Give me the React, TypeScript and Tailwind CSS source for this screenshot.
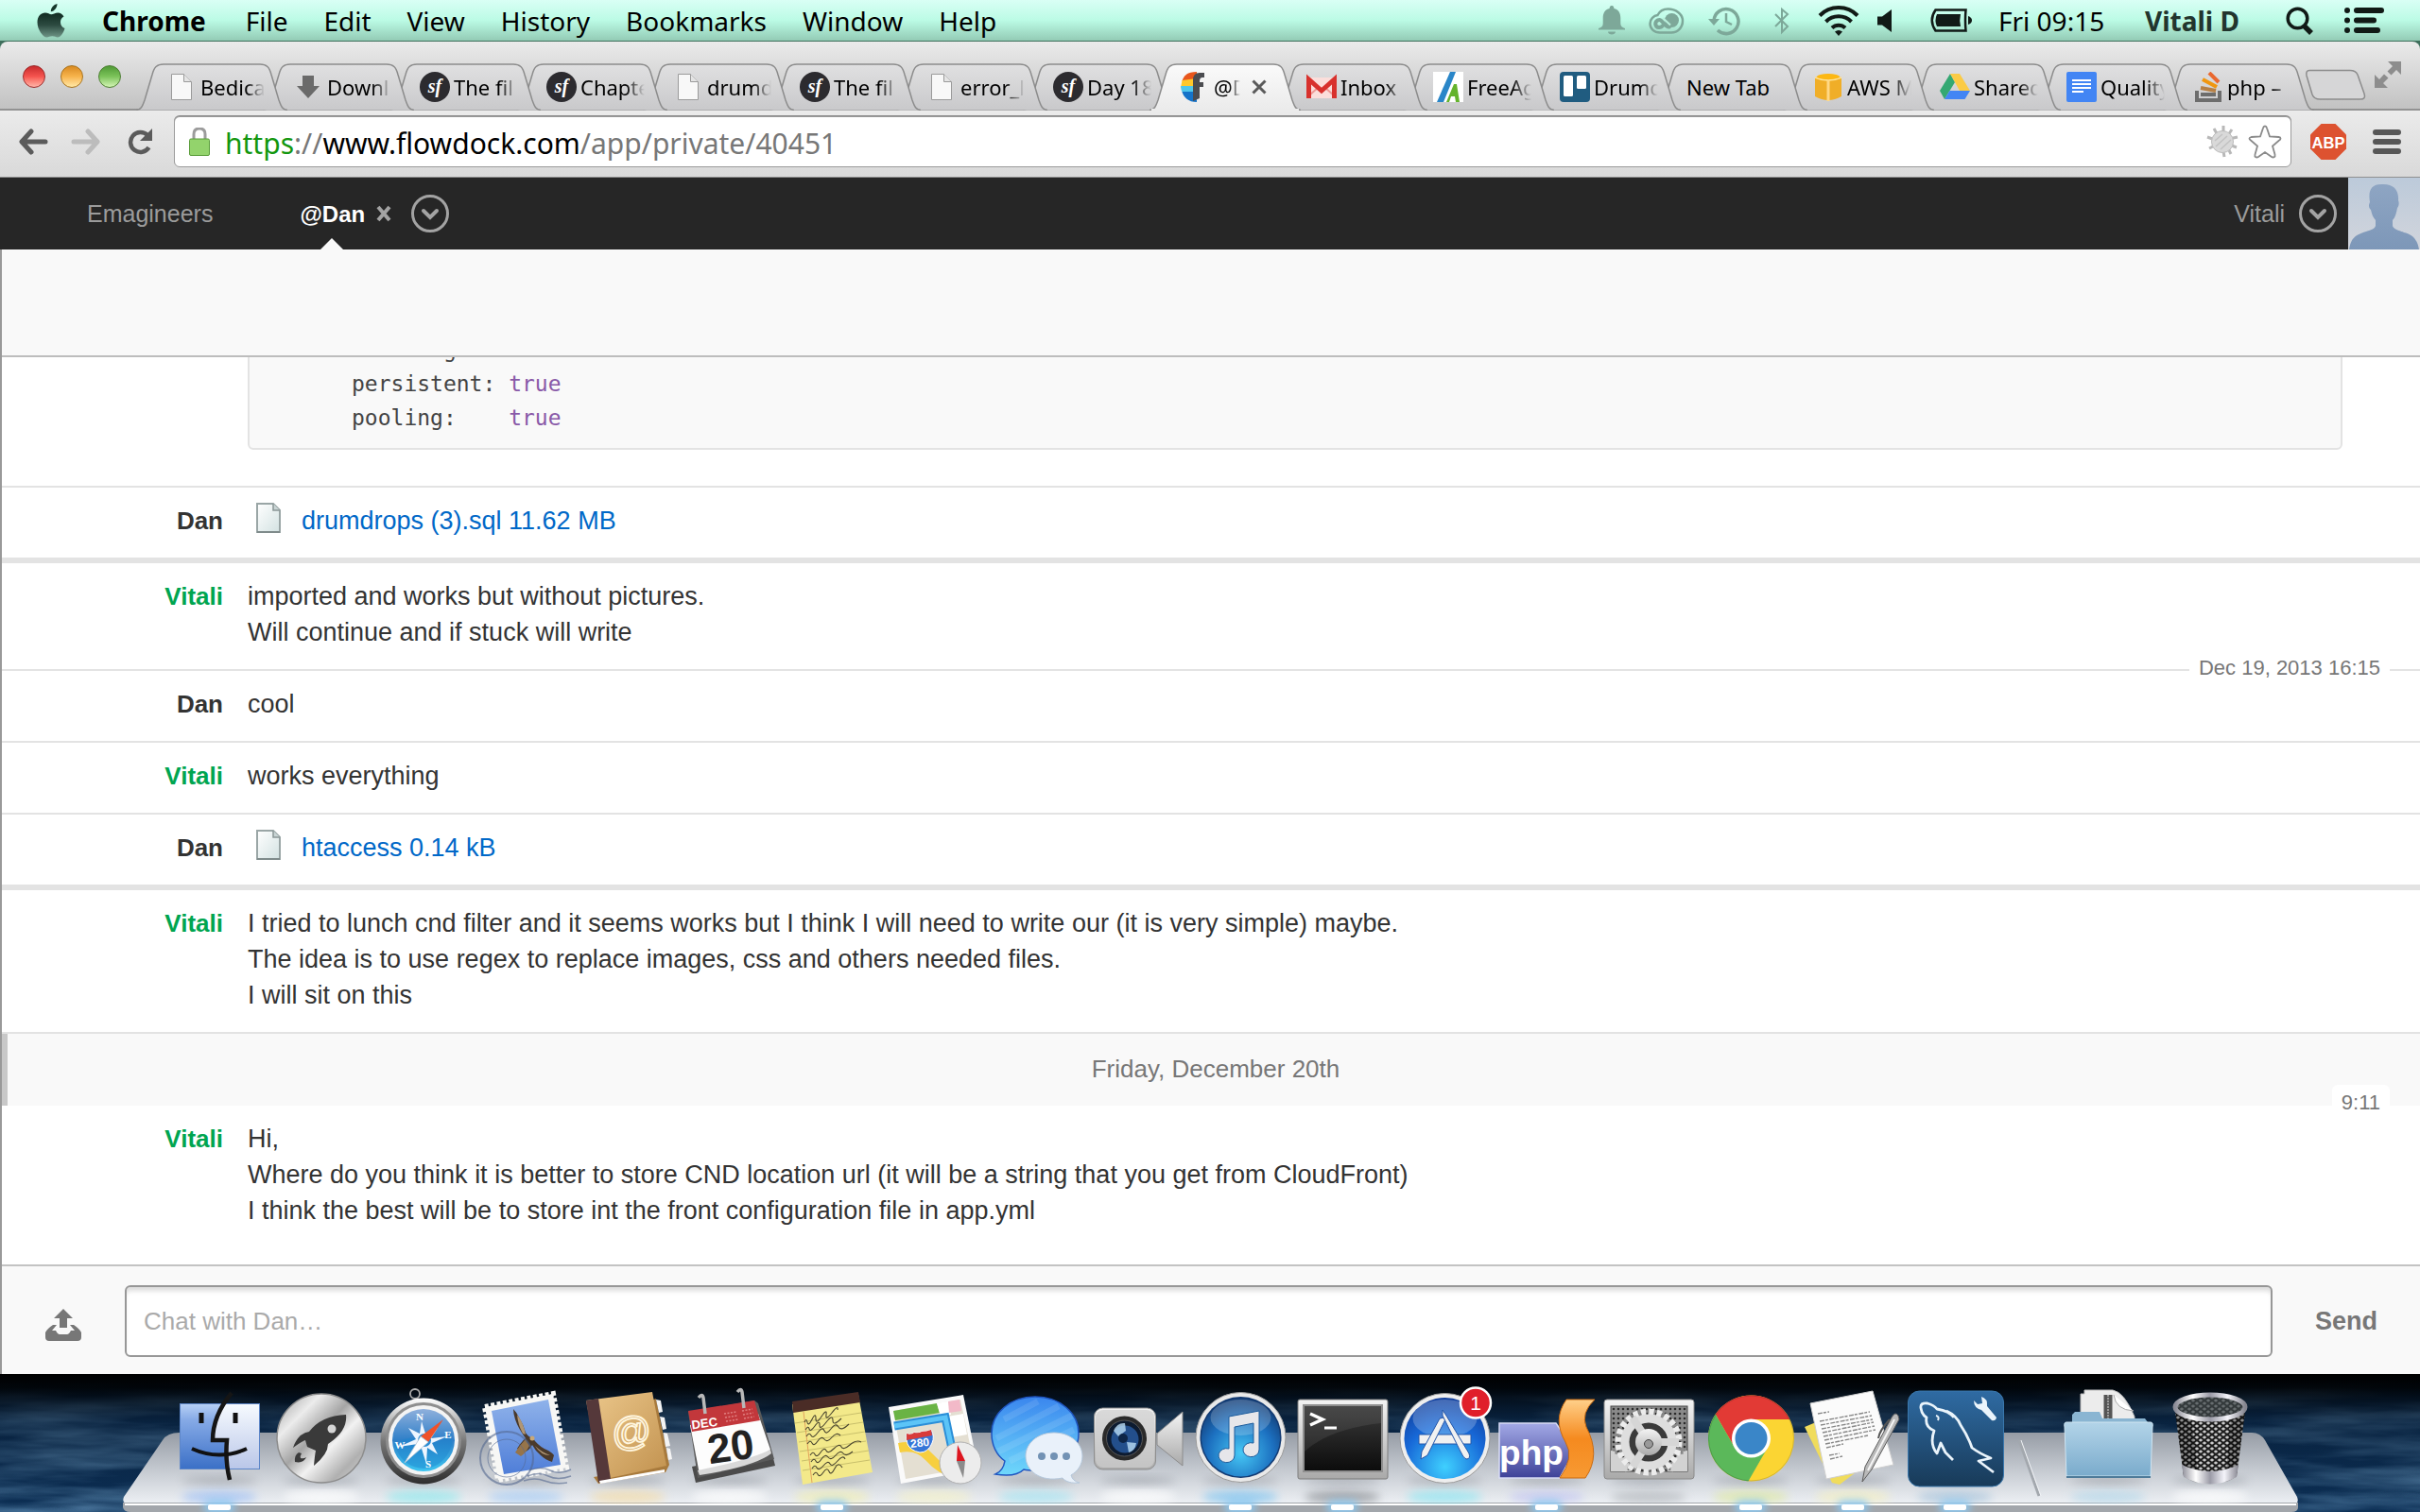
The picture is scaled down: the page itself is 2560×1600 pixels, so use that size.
import React from 'react';

const UI = "font-['Noto_Sans',sans-serif]";

/* ---------- macOS menu bar ---------- */

const MENUS = ['File', 'Edit', 'View', 'History', 'Bookmarks', 'Window', 'Help'];

function AppleLogo() {
  return (
    <svg viewBox="0 0 32 38" className="h-[38px] w-8" aria-label="Apple">
      <defs>
        <linearGradient id="apl" x1="0" y1="0" x2="0" y2="1">
          <stop offset="0" stopColor="#0f2a20" />
          <stop offset=".5" stopColor="#2c4a40" />
          <stop offset="1" stopColor="#6f9587" />
        </linearGradient>
      </defs>
      <path fill="#15362a" d="M22.500 1C22.600 5 19.500 9 15.800 9.300 15.500 5.500 18.800 1.800 22.500 1Z" />
      <path
        fill="url(#apl)"
        d="M29.500 14.500C26.800 16.200 26 18.200 26 20.500c0 3 1.700 5.400 4.500 6.500-1.200 4.500-4.500 9.500-7.500 9.500-2 0-3-1.200-5.700-1.200S13.500 36.500 11.500 36.500C7.500 36.500 1.500 28.500 1.500 20.500 1.500 14 5.500 10.500 9.800 10.500c2.700 0 4.800 1.700 6.500 1.700 1.600 0 4-1.800 7.200-1.800 2 0 4.500 1 6 4.100Z"
      />
    </svg>
  );
}

function MenuBar() {
  return (
    <header
      className={`flex h-11 shrink-0 items-center border-b border-[#3f6f5c] bg-linear-to-b from-[#d9fff5] via-[#bbfbe5] to-[#93cbb5] px-[38px] text-[28px] leading-none text-black ${UI}`}
    >
      <AppleLogo />
      <nav className="ml-[38px] flex items-center gap-[38px]">
        <button className="mr-1 font-bold">Chrome</button>
        {MENUS.map((m) => (
          <button key={m}>{m}</button>
        ))}
      </nav>
      <div className="ml-auto flex items-center text-[#111a16]">
        <svg viewBox="0 0 28 32" className="h-8 w-7 fill-[#7da899]" aria-label="Notifications">
          <path d="M14 0c2 0 2.500 2 2.300 3 5 1 7 5 7 10v6c0 3 2 4 4.700 5v1.500H0V24c3-1 4.700-2 4.700-5v-6c0-5 2-9 7-10C11.500 2 12 0 14 0Z" />
          <path d="M10 27.500h8c0 4-8 4-8 0Z" />
        </svg>
        <svg viewBox="0 0 38 28" className="ml-[25px] h-7 w-[38px]" fill="none" stroke="#7da899" aria-label="Creative Cloud">
          <path strokeWidth="2.500" d="M12 26.500C6 26.500 1.500 22.500 1.500 17c0-5 4-8.500 8-9 2-4 6-6.500 11-6.500 8 0 15.500 5 15.500 12.500 0 7-5 12.500-12 12.500Z" />
          <circle cx="24.500" cy="13.500" r="7.500" fill="#7da899" stroke="none" />
          <path strokeWidth="4" strokeLinecap="round" d="M22 20.500c-5 1-7-8-11-7.500-5 .5-5 8 0 8 2 0 3-.5 4-2" />
          <path strokeWidth="2" stroke="#b9f0dc" d="M15 11l8 7.500" />
        </svg>
        <svg viewBox="0 0 34 32" className="ml-[25px] h-8 w-[34px]" fill="none" stroke="#7da899" strokeWidth="3.500" aria-label="Time Machine">
          <path d="M6 16a13 13 0 1 1 4 10" />
          <path d="M19 8v9l6 3" strokeWidth="2.500" />
          <path d="M0 14h12l-6 7Z" fill="#7da899" stroke="none" />
        </svg>
        <svg viewBox="0 0 16 30" className="ml-9 h-[30px] w-4" fill="none" stroke="#7da899" strokeWidth="2" aria-label="Bluetooth">
          <path d="M1 8l13 13-6 6V3l6 5L1 21" />
        </svg>
        <svg viewBox="0 0 44 32" className="ml-[30px] h-8 w-11" fill="none" stroke="#111a16" strokeWidth="4" aria-label="Wi-Fi">
          <path d="M2 10.500a28 28 0 0 1 40 0M8.500 17a19 19 0 0 1 27 0M15 23.500a10 10 0 0 1 14 0" />
          <path d="M22 32l-4-4.500q4-3 8 0Z" fill="#111a16" stroke="none" />
        </svg>
        <svg viewBox="0 0 16 24" className="ml-[19px] h-6 w-4" fill="#111a16" aria-label="Volume">
          <path d="M0 7.500h5L15 0v24L5 16.500H0Z" />
        </svg>
        <svg viewBox="0 0 44 25" className="ml-10 h-[25px] w-11" fill="none" stroke="#111a16" strokeWidth="2.500" aria-label="Battery">
          <path d="M5.500 1.500H37.500Q36.500 12.500 37.500 23.500H5.500Q-2 12.500 5.500 1.500Z" />
          <path d="M7 6h25q-1.500 6.500 0 13H7q-3-6.500 0-13Z" fill="#111a16" stroke="none" />
          <path d="M40 8q4 1.500 4 4.500t-4 4.500Z" fill="#111a16" stroke="none" />
        </svg>
        <time className="ml-7 w-[120px] text-black">Fri 09:15</time>
        <button className="ml-[35px] w-[106px] text-left font-bold whitespace-nowrap text-[#22352d]">Vitali D</button>
        <button aria-label="Spotlight" className="ml-[43px]">
          <svg viewBox="0 0 30 30" className="size-[30px]" fill="none" stroke="#111a16" strokeWidth="3.500">
            <circle cx="12.500" cy="12.500" r="10.300" />
            <path d="M19 20l8 8" strokeWidth="5.500" />
          </svg>
        </button>
        <button aria-label="Notification Center" className="ml-8">
          <svg viewBox="0 0 42 27" className="h-[27px] w-[42px]" stroke="#111a16" strokeWidth="6" strokeLinecap="round">
            <path d="M3 3h0M3 13.500h0M3 24h0M13 3h26M13 13.500h18M13 24h22" />
          </svg>
        </button>
      </div>
    </header>
  );
}

/* ---------- favicons ---------- */

function PageIcon() {
  return (
    <svg viewBox="0 0 32 32" className="size-8">
      <path d="M5.500 2.500h13l8 8v19h-21Z" fill="#f8f8f8" stroke="#9a9a9a" />
      <path d="M18.500 2.500v8h8" fill="#e4e4e4" stroke="#9a9a9a" />
    </svg>
  );
}
function DownIcon() {
  return (
    <svg viewBox="0 0 32 32" className="size-8">
      <path d="M10 4h12v11h6L16 28 4 15h6Z" fill="#6a6a6a" />
    </svg>
  );
}
function SymfonyIcon() {
  return (
    <svg viewBox="0 0 32 32" className="size-8">
      <circle cx="16" cy="16" r="16" fill="#2c2b2f" />
      <text x="16" y="22" textAnchor="middle" fill="#fff" fontFamily="Liberation Serif, serif" fontStyle="italic" fontWeight="bold" fontSize="20">
        sf
      </text>
    </svg>
  );
}
function FlowdockIcon() {
  return (
    <svg viewBox="0 0 32 32" className="size-8">
      <path d="M18 0C8 0 4 4 2.500 10L18 12Z" fill="#e8561c" />
      <path d="M2.500 9L18 7v10H1Z" fill="#ffc82a" />
      <path d="M1 15h17v8L3 22Q1 19 1 15Z" fill="#4fc6ea" />
      <path d="M2.500 21L18 21v11C9 32 4 27 2.500 21Z" fill="#1573c9" />
      <path d="M14 31V9q0-8 7-8h5v5h-2q-3 0-3 4v1h4v5h-4v12Z" fill="#4b4c50" />
    </svg>
  );
}
function GmailIcon() {
  return (
    <svg viewBox="0 0 32 32" className="size-8">
      <path d="M0 6h32v22H0Z" fill="#fbdedb" />
      <path d="M3 25l10-9M29 25l-10-9" stroke="#ee9a96" strokeWidth="2" />
      <path d="M2.500 28V8L16 20 29.500 8v20" fill="none" stroke="#d8312d" strokeWidth="5" />
    </svg>
  );
}
function FreeAgentIcon() {
  return (
    <svg viewBox="0 0 32 32" className="size-8">
      <path d="M0 0h32v32H0Z" fill="#fff" />
      <path d="M18 0h6L11 32H4Z" fill="#2a86c8" />
      <path d="M14 32l8-19h3l3 19h-4l-1-6h-4l-2 6Z" fill="#64b32c" />
    </svg>
  );
}
function TrelloIcon() {
  return (
    <svg viewBox="0 0 32 32" className="size-8">
      <rect width="32" height="32" rx="4" fill="#205c80" />
      <rect x="4" y="4" width="10" height="22" rx="1.500" fill="#fff" />
      <rect x="18" y="4" width="10" height="14" rx="1.500" fill="#fff" />
    </svg>
  );
}
function AwsIcon() {
  return (
    <svg viewBox="0 0 32 32" className="size-8">
      <path d="M2 6q14-7 28 0v20q-14 8-28 0Z" fill="#f0ae28" />
      <path d="M2 6q14 6 28 0" fill="none" stroke="#ffe49a" strokeWidth="1.500" />
      <path d="M16 9v22" stroke="#ffd886" strokeWidth="3" />
      <ellipse cx="16" cy="5" rx="12" ry="3" fill="#fdb813" />
    </svg>
  );
}
function DriveIcon() {
  return (
    <svg viewBox="0 0 32 32" className="size-8">
      <path d="M11 2L0 20l5 9L16 11Z" fill="#34a872" />
      <path d="M11 2h10l11 18H21Z" fill="#fbcb45" />
      <path d="M10.500 20H32l-5.500 9H5Z" fill="#4285f4" />
    </svg>
  );
}
function DocsIcon() {
  return (
    <svg viewBox="0 0 32 32" className="size-8">
      <rect width="32" height="32" rx="2" fill="#4285f4" />
      <path d="M6 9h20M6 13h20M6 17h20M6 21h12" stroke="#fff" strokeWidth="2" />
    </svg>
  );
}
function StackIcon() {
  return (
    <svg viewBox="0 0 32 32" className="size-8" fill="none">
      <path d="M4 20v10h24V20" stroke="#6d6d6d" strokeWidth="4" />
      <path d="M8 24h16" stroke="#6d6d6d" strokeWidth="4" />
      <path d="M8 17l16 3" stroke="#b78045" strokeWidth="4" />
      <path d="M10 8l15 8" stroke="#f0960f" strokeWidth="4" />
      <path d="M17 1l10 10" stroke="#e9682f" strokeWidth="4" />
    </svg>
  );
}

/* ---------- Chrome window ---------- */

type TabInfo = { title: string; icon: React.ReactNode; active?: boolean };

const TABS: TabInfo[] = [
  { title: 'Bedica', icon: <PageIcon /> },
  { title: 'Downl', icon: <DownIcon /> },
  { title: 'The fil', icon: <SymfonyIcon /> },
  { title: 'Chapte', icon: <SymfonyIcon /> },
  { title: 'drumd', icon: <PageIcon /> },
  { title: 'The fil', icon: <SymfonyIcon /> },
  { title: 'error_l', icon: <PageIcon /> },
  { title: 'Day 18', icon: <SymfonyIcon /> },
  { title: '@D', icon: <FlowdockIcon />, active: true },
  { title: 'Inbox', icon: <GmailIcon /> },
  { title: 'FreeAg', icon: <FreeAgentIcon /> },
  { title: 'Drumd', icon: <TrelloIcon /> },
  { title: 'New Tab', icon: null },
  { title: 'AWS M', icon: <AwsIcon /> },
  { title: 'Shared', icon: <DriveIcon /> },
  { title: 'Quality', icon: <DocsIcon /> },
  { title: 'php –', icon: <StackIcon /> },
];

function Tab({ tab, order }: { tab: TabInfo; order: number }) {
  return (
    <div
      className={`relative -mr-[26px] flex h-[50px] w-[160px] shrink-0 items-center pl-8 ${tab.active ? 'pr-9' : 'pr-6'}`}
      style={{ zIndex: order }}
    >
      <svg viewBox="0 0 160 50" preserveAspectRatio="none" className="absolute inset-0 h-full w-full" aria-hidden="true">
        <defs>
          <linearGradient id="tabOn" x1="0" y1="0" x2="0" y2="1">
            <stop offset="0" stopColor="#fafafa" />
            <stop offset="1" stopColor="#ebebeb" />
          </linearGradient>
          <linearGradient id="tabOff" x1="0" y1="0" x2="0" y2="1">
            <stop offset="0" stopColor="#e0e0e1" />
            <stop offset="1" stopColor="#c9c9cb" />
          </linearGradient>
        </defs>
        <path
          d="M0 49.500C6 49 7 44 9 39L17 12C19 4 22 1 29 1H131C138 1 141 4 143 12L151 39C153 44 154 49 160 49.500"
          fill={tab.active ? 'url(#tabOn)' : 'url(#tabOff)'}
          stroke="#8c8c8c"
          strokeWidth="1.500"
        />
        {tab.active && <path d="M2 49.500H158" stroke="#ebebeb" strokeWidth="3" />}
      </svg>
      {tab.icon && <span className="relative mr-1 shrink-0">{tab.icon}</span>}
      <button
        className={`relative min-w-0 flex-1 overflow-hidden text-left text-[22px] leading-8 whitespace-nowrap text-black ${
          tab.icon
            ? tab.active
              ? '[mask-image:linear-gradient(to_right,black_60%,transparent)]'
              : '[mask-image:linear-gradient(to_right,black_70%,transparent)]'
            : ''
        }`}
      >
        {tab.title}
      </button>
      {tab.active && (
        <button aria-label="Close tab" className="relative ml-3">
          <svg viewBox="0 0 16 16" className="size-4" stroke="#5a5a5a" strokeWidth="3">
            <path d="M1.500 1.500l13 13M14.500 1.500l-13 13" />
          </svg>
        </button>
      )}
    </div>
  );
}

function TabStrip() {
  return (
    <div className={`flex h-[73px] shrink-0 items-end rounded-t-lg border-b-2 border-[#929292] bg-linear-to-b from-[#ebebeb] to-[#c2c2c2] ${UI}`}>
      <div className="mb-[22px] flex gap-4 pl-6">
        {[
          ['Close', 'from-[#c8292c] via-[#f5544f] to-[#ffb3a8] border-[#9c2a2a]'],
          ['Minimise', 'from-[#d98a1e] via-[#f7b44c] to-[#ffe9a6] border-[#a8731e]'],
          ['Zoom', 'from-[#4f9a35] via-[#7cc35a] to-[#d3f5b4] border-[#4d7f33]'],
        ].map(([label, tone]) => (
          <button key={label} aria-label={label} className={`size-6 rounded-full border bg-linear-to-b ${tone}`} />
        ))}
      </div>
      <div className="relative -mb-0.5 ml-4 flex">
        {TABS.map((t, i) => (
          <Tab key={i} tab={t} order={t.active ? 40 : 30 - i} />
        ))}
      </div>
      <button aria-label="New tab" className="mb-2 ml-4">
        <svg viewBox="0 0 66 34" className="h-[34px] w-[66px]">
          <path d="M5 1.500H48Q54 1.500 56 6L63 26Q65 32 59 32H16Q10 32 8 27L2 7Q1 1.500 5 1.500Z" fill="#d6d6d7" stroke="#8c8c8c" strokeWidth="1.500" />
        </svg>
      </button>
      <button aria-label="Enter full screen" className="mr-5 mb-[22px] ml-auto">
        <svg viewBox="0 0 28 28" className="size-7" fill="#8d8d8d">
          <path d="M14 0h14v14l-5-5-5.500 5.500-4-4L19 5ZM0 28V14l5 5 5-5.500 4.500 4L9 23l5 5Z" />
        </svg>
      </button>
    </div>
  );
}

function Toolbar() {
  return (
    <div className={`flex h-[71px] shrink-0 items-center border-b border-[#8f8f8f] bg-linear-to-b from-[#ebebeb] to-[#d9d9d9] pr-5 pb-1 pl-5 ${UI}`}>
      <button aria-label="Back">
        <svg viewBox="0 0 31 28" className="h-7 w-[31px]" fill="none" stroke="#5b5b5b" strokeWidth="5" strokeLinecap="round" strokeLinejoin="round">
          <path d="M13 3L3 14l10 11M4 14h24" />
        </svg>
      </button>
      <button aria-label="Forward" className="ml-6">
        <svg viewBox="0 0 31 28" className="h-7 w-[31px]" fill="none" stroke="#bcbcbc" strokeWidth="5" strokeLinecap="round" strokeLinejoin="round">
          <path d="M18 3l10 11-10 11M27 14H3" />
        </svg>
      </button>
      <button aria-label="Reload" className="ml-7">
        <svg viewBox="0 0 28 28" className="size-7" fill="none" stroke="#5b5b5b" strokeWidth="4.500">
          <path d="M22 7a10.500 10.500 0 1 0 1.500 13" />
          <path d="M27 0v13H14Z" fill="#5b5b5b" stroke="none" />
        </svg>
      </button>
      <div className="ml-[22px] flex h-[54px] flex-1 items-center rounded-md border border-[#9b9b9b] bg-white pr-[9px] pl-[15px] text-[30px] leading-none shadow-[0_-1px_0_#8a8a8a]">
        <svg viewBox="0 0 22 30" className="h-[30px] w-[22px]" aria-label="Secure">
          <path d="M5 13V7q0-6 6-6t6 6v6" fill="none" stroke="#9c9c9c" strokeWidth="3" />
          <rect x=".5" y="12" width="21" height="17.500" rx="1.500" fill="#93d36c" stroke="#5a9c3a" />
        </svg>
        <div className="ml-4 flex-1 pt-1 text-[#777]" role="textbox" aria-label="Address">
          <span className="text-[#13970f]">https</span>://<span className="text-black">www.flowdock.com</span>/app/private/40451
        </div>
        <svg viewBox="0 0 34 34" className="size-[34px]" aria-label="Blocked plug-in">
          <g stroke="#b8b8b8" strokeWidth="3" fill="none">
            <path d="M1 12l8 3M3 24l8-4M8 3l4 7M18 0v8M27 4l-4 6M33 12l-9 2M32 23l-8-3M26 30l-3-6M19 33l-1-6" />
          </g>
          <circle cx="17" cy="17" r="11.500" fill="#d9d9d9" stroke="#bdbdbd" />
          <path d="M9 16l8-7M10 22L22 11M15 25l11-10" stroke="#c2c2c2" strokeWidth="1.500" />
        </svg>
        <button aria-label="Bookmark this page" className="ml-2.5">
          <svg viewBox="0 0 36 36" className="size-9">
            <path
              d="M18 1.500q1.500 0 2 2l3 9 9.500.5q2 .2 2 1.500t-1.500 2l-7 6 2.500 9q.5 2-.8 2.700t-2.700-.3L18 29l-7 4.900q-1.500 1-2.800.3t-.7-2.700l2.500-9-7-6q-1.500-1-1.500-2t2-1.500L13 12.500l3-9q.5-2 2-2Z"
              fill="#fff"
              stroke="#8a8a8a"
              strokeWidth="1.800"
            />
          </svg>
        </button>
      </div>
      <button aria-label="Adblock Plus" className="ml-5">
        <svg viewBox="0 0 38 38" className="size-[38px]">
          <path d="M11.500 0h15L38 11.500v15L26.500 38h-15L0 26.500v-15Z" fill="#dd5230" />
          <text x="19" y="25.500" textAnchor="middle" fill="#fff" fontFamily="Liberation Sans, sans-serif" fontWeight="bold" fontSize="16.500">
            ABP
          </text>
        </svg>
      </button>
      <button aria-label="Chrome menu" className="ml-7">
        <svg viewBox="0 0 30 26" className="h-[26px] w-[30px]" stroke="#575757" strokeWidth="6" strokeLinecap="round">
          <path d="M3 3h24M3 13h24M3 23h24" />
        </svg>
      </button>
    </div>
  );
}

/* ---------- Flowdock ---------- */

function ChevronButton({ label }: { label: string }) {
  return (
    <button aria-label={label}>
      <svg viewBox="0 0 42 42" className="size-[42px]" fill="none" stroke="#a3a3a3" strokeWidth="3">
        <circle cx="21" cy="21" r="18.500" />
        <path d="M14 18l7 7 7-7" strokeWidth="4" strokeLinecap="round" />
      </svg>
    </button>
  );
}

function FlowHeader() {
  return (
    <nav className="flex h-[76px] shrink-0 items-center bg-[#262626] pl-[92px] text-[25px] text-[#9b9b9b]">
      <a href="#emagineers" className="pt-0.5">Emagineers</a>
      <div className="relative ml-[92px] flex h-full items-center">
        <a href="#dan" className="pt-0.5 text-[24px] font-bold text-white">@Dan</a>
        <span className="absolute bottom-0 left-[22px] border-x-[12px] border-b-[12px] border-x-transparent border-b-[#f9f9f9]" />
      </div>
      <button aria-label="Close conversation" className="ml-3">
        <svg viewBox="0 0 16 18" className="h-[18px] w-4" stroke="#a3a3a3" strokeWidth="4">
          <path d="M2 2l12 14M14 2L2 16" />
        </svg>
      </button>
      <span className="ml-5 flex">
        <ChevronButton label="More conversations" />
      </span>
      <span className="mr-3.5 ml-auto pt-0.5">Vitali</span>
      <ChevronButton label="Account menu" />
      <svg viewBox="0 0 76 76" className="ml-[11px] size-[76px]" aria-label="Avatar">
        <defs>
          <linearGradient id="avBg" x1="0" y1="0" x2="0" y2="1">
            <stop offset="0" stopColor="#bccada" />
            <stop offset="1" stopColor="#d2d5dc" />
          </linearGradient>
          <linearGradient id="avFg" x1="0" y1="0" x2="0" y2="1">
            <stop offset="0" stopColor="#8ea5c3" />
            <stop offset="1" stopColor="#7d97b8" />
          </linearGradient>
        </defs>
        <path d="M0 0h76v76H0Z" fill="url(#avBg)" />
        <path
          d="M1 76C3 62 10 60 19 57c6-2 9-3 10-6v-6c-3-3-4-7-5-11-3-3-2-6-1-8C21 14 24 7 35 7c12-1 19 5 18 17 1 2 1 6-1 8-1 5-2 10-5 13v6c1 4 8 5 12 7 8 2 14 6 16 18Z"
          fill="url(#avFg)"
        />
      </svg>
    </nav>
  );
}

function FileIcon() {
  return (
    <svg viewBox="0 0 26 32" className="h-8 w-[26px]" aria-hidden="true">
      <defs>
        <linearGradient id="fileG" x1="0" y1="0" x2="1" y2="1">
          <stop offset="0" stopColor="#fff" />
          <stop offset="1" stopColor="#d3e2e2" />
        </linearGradient>
      </defs>
      <path d="M1 1h17l7 7v23H1Z" fill="url(#fileG)" stroke="#9aa6a6" strokeWidth="2" />
      <path d="M18 1v7h7" fill="#c9d5d5" stroke="#8b9797" strokeWidth="1.500" />
      <path d="M1 31h24" stroke="#7f8b8b" strokeWidth="2" />
    </svg>
  );
}

type Msg = { who: 'Dan' | 'Vitali'; lines?: string[]; file?: string; time?: string; edge: string };

const MESSAGES: Msg[] = [
  { who: 'Dan', file: 'drumdrops (3).sql 11.62 MB', edge: 'border-b-[6px]' },
  { who: 'Vitali', lines: ['imported and works but without pictures.', 'Will continue and if stuck will write'], edge: 'border-b-2' },
  { who: 'Dan', lines: ['cool'], time: 'Dec 19, 2013 16:15', edge: 'border-b-2' },
  { who: 'Vitali', lines: ['works everything'], edge: 'border-b-2' },
  { who: 'Dan', file: 'htaccess 0.14 kB', edge: 'border-b-[6px]' },
  {
    who: 'Vitali',
    lines: [
      'I tried to lunch cnd filter and it seems works but I think I will need to write our (it is very simple) maybe.',
      'The idea is to use regex to replace images, css and others needed files.',
      'I will sit on this',
    ],
    edge: 'border-b-2',
  },
];

const LATEST: Msg = {
  who: 'Vitali',
  lines: [
    'Hi,',
    'Where do you think it is better to store CND location url (it will be a string that you get from CloudFront)',
    'I think the best will be to store int the front configuration file in app.yml',
  ],
  time: '9:11',
  edge: 'border-b-0',
};

function Message({ m }: { m: Msg }) {
  return (
    <li className={`relative flex gap-[26px] border-[#e3e3e3] pt-4 pb-5 text-[27px] leading-[38px] text-[#333] ${m.edge}`}>
      {m.time && (
        <time className="absolute -top-[22px] right-8 rounded-md bg-white px-2.5 text-[22px] text-[#777]">{m.time}</time>
      )}
      <span className={`w-[234px] shrink-0 text-right text-[26px] font-bold ${m.who === 'Vitali' ? 'text-[#00a550]' : ''}`}>{m.who}</span>
      {m.file ? (
        <a href="#file" className="flex text-[#0068c8]">
          <span className="mr-[22px] ml-[9px]">
            <FileIcon />
          </span>
          {m.file}
        </a>
      ) : (
        <div>
          {m.lines!.map((l) => (
            <p key={l}>{l}</p>
          ))}
        </div>
      )}
    </li>
  );
}

function Conversation() {
  const settings = [
    ['encoding:   ', 'utf8'],
    ['persistent: ', 'true'],
    ['pooling:    ', 'true'],
  ];
  return (
    <main className="flex min-h-0 flex-1 flex-col justify-end overflow-hidden bg-white">
      <div className="shrink-0 border-b-2 border-[#e3e3e3] pr-[82px] pb-[38px] pl-[260px]">
        <pre className="rounded-md border-2 border-[#e3e3e3] bg-[#f9f9f9] pb-3.5 pl-[108px] font-['DejaVu_Sans_Mono',monospace] text-[23px] leading-9 text-[#444]">
          {settings.map(([k, v]) => (
            <div key={k}>
              {k}
              <span className="text-[#8959a8]">{v}</span>
            </div>
          ))}
        </pre>
      </div>
      <ul className="shrink-0">
        {MESSAGES.map((m, i) => (
          <Message key={i} m={m} />
        ))}
        <li className="border-l-[6px] border-[#c8c8c8] bg-[#f9f9f9] pt-[18px] pb-5 pl-1 text-center text-[26px] leading-[38px] text-[#777]">
          Friday, December 20th
        </li>
        <Message m={LATEST} />
      </ul>
      <div className="h-[18px] shrink-0" />
    </main>
  );
}

function Composer() {
  return (
    <form className="flex shrink-0 items-center border-t-2 border-[#c3c3c3] bg-[#f9f9f9] pt-5 pb-[18px] pl-[45px]" onSubmit={(e) => e.preventDefault()}>
      <button type="button" aria-label="Upload a file">
        <svg viewBox="0 0 40 34" className="mt-2 h-[34px] w-10" fill="#777">
          <path d="M20 0l10 10h-6v10h-8V10h-6Z" />
          <path d="M9 17h4l-5 6h4q2 4 4 4h8q2 0 4-4h4l-5-6h4q6 4 8 8v5q0 4-4 4H5q-4 0-4-4v-5q2-4 8-8Z" />
        </svg>
      </button>
      <input
        aria-label="Chat with Dan"
        placeholder="Chat with Dan…"
        className="ml-[45px] h-[76px] min-w-0 flex-1 rounded-md border-2 border-[#979797] bg-white px-[18px] text-[26px] shadow-[inset_0_6px_5px_-2px_rgba(0,0,0,0.14)] outline-none placeholder:text-[#aaa]"
      />
      <button className="w-[156px] text-center text-[27px] font-bold text-[#777]">Send</button>
    </form>
  );
}

/* ---------- Dock ---------- */

function DockDefs() {
  return (
    <svg className="absolute size-0" aria-hidden="true">
      <defs>
        <linearGradient id="finL" x1="0" y1="0" x2="0" y2="1">
          <stop offset="0" stopColor="#b9d2f6" />
          <stop offset=".25" stopColor="#86aae6" />
          <stop offset="1" stopColor="#3a6fc6" />
        </linearGradient>
        <linearGradient id="finR" x1="0" y1="0" x2="0" y2="1">
          <stop offset="0" stopColor="#f7fbff" />
          <stop offset="1" stopColor="#b9c6e8" />
        </linearGradient>
        <linearGradient id="metal" x1="0" y1="0" x2="1" y2="1">
          <stop offset="0" stopColor="#9a9a9a" />
          <stop offset=".25" stopColor="#ececec" />
          <stop offset=".45" stopColor="#a5a5a5" />
          <stop offset=".6" stopColor="#f2f2f2" />
          <stop offset=".8" stopColor="#b0b0b0" />
          <stop offset="1" stopColor="#d9d9d9" />
        </linearGradient>
        <linearGradient id="rim" x1="0" y1="0" x2="0" y2="1">
          <stop offset="0" stopColor="#fff" />
          <stop offset=".5" stopColor="#777" />
          <stop offset="1" stopColor="#2e2e2e" />
        </linearGradient>
        <radialGradient id="blueGlow" cx=".5" cy=".85" r=".85">
          <stop offset="0" stopColor="#3fd0ff" />
          <stop offset=".6" stopColor="#1769d8" />
          <stop offset="1" stopColor="#123f9c" />
        </radialGradient>
        <radialGradient id="itunesG" cx=".5" cy=".7" r=".7">
          <stop offset="0" stopColor="#46c8f5" />
          <stop offset=".6" stopColor="#1c70c0" />
          <stop offset="1" stopColor="#123a72" />
        </radialGradient>
        <linearGradient id="safG" x1="0" y1="0" x2="0" y2="1">
          <stop offset="0" stopColor="#8fb0dc" />
          <stop offset=".5" stopColor="#2f7fc8" />
          <stop offset="1" stopColor="#3cc4f0" />
        </linearGradient>
        <linearGradient id="skyG" x1="0" y1="0" x2="0" y2="1">
          <stop offset="0" stopColor="#8fb2ea" />
          <stop offset="1" stopColor="#4f7ed8" />
        </linearGradient>
        <linearGradient id="tanG" x1="0" y1="0" x2="1" y2="1">
          <stop offset="0" stopColor="#ecc88c" />
          <stop offset="1" stopColor="#c1914e" />
        </linearGradient>
        <linearGradient id="bubG" x1="0" y1="0" x2="0" y2="1">
          <stop offset="0" stopColor="#3a86ee" />
          <stop offset="1" stopColor="#6fd8fb" />
        </linearGradient>
        <linearGradient id="silver" x1="0" y1="0" x2="0" y2="1">
          <stop offset="0" stopColor="#f4f4f4" />
          <stop offset="1" stopColor="#a9a9a9" />
        </linearGradient>
        <linearGradient id="termG" x1="0" y1="0" x2="0" y2="1">
          <stop offset="0" stopColor="#3a3a3a" />
          <stop offset="1" stopColor="#0c0c0c" />
        </linearGradient>
        <linearGradient id="phpG" x1="0" y1="0" x2="0" y2="1">
          <stop offset="0" stopColor="#a3a9e6" />
          <stop offset="1" stopColor="#3e4298" />
        </linearGradient>
        <linearGradient id="stormG" x1="0" y1="0" x2="0" y2="1">
          <stop offset="0" stopColor="#ffd08a" />
          <stop offset=".5" stopColor="#f58a1f" />
          <stop offset="1" stopColor="#f79a33" />
        </linearGradient>
        <linearGradient id="sqlG" x1="0" y1="0" x2="0" y2="1">
          <stop offset="0" stopColor="#2f6ba3" />
          <stop offset="1" stopColor="#183a58" />
        </linearGradient>
        <linearGradient id="foldG" x1="0" y1="0" x2="0" y2="1">
          <stop offset="0" stopColor="#b3d4e8" />
          <stop offset="1" stopColor="#7aabcc" />
        </linearGradient>
        <linearGradient id="canG" x1="0" y1="0" x2="1" y2="0">
          <stop offset="0" stopColor="#8d8d98" />
          <stop offset=".25" stopColor="#fff" />
          <stop offset=".5" stopColor="#9a9aa6" />
          <stop offset=".75" stopColor="#f4f4fa" />
          <stop offset="1" stopColor="#85858f" />
        </linearGradient>
        <pattern id="mesh" width="8" height="6" patternUnits="userSpaceOnUse">
          <rect width="8" height="6" fill="#c9c9c9" />
          <path d="M0 0l8 6M8 0L0 6" stroke="#1c1c1c" strokeWidth="2" />
        </pattern>
        <pattern id="perf" width="5" height="5" patternUnits="userSpaceOnUse">
          <rect width="5" height="5" fill="#8a8a8a" />
          <circle cx="2" cy="2" r="1.300" fill="#2b2b2b" />
        </pattern>
        <filter id="soft" x="-30%" y="-100%" width="160%" height="300%">
          <feGaussianBlur stdDeviation="5" />
        </filter>
      </defs>
    </svg>
  );
}

const finder = (
  <>
    <rect x="12" y="21" width="85" height="70" fill="url(#finR)" />
    <path d="M12 21H60Q47 40 47 59H62V91H12Z" fill="url(#finL)" />
    <rect x="12.500" y="21.500" width="84" height="69" fill="none" stroke="#5d86c8" />
    <path d="M35 31v11M71 31v11" stroke="#111" strokeWidth="5" />
    <path d="M67 10Q47 34 47 60H62Q60 82 65 102" fill="none" stroke="#151515" strokeWidth="4.500" />
    <path d="M25 69Q54 82 83 69" fill="none" stroke="#111" strokeWidth="4" />
  </>
);
const launchpad = (
  <>
    <circle cx="54" cy="58" r="47" fill="url(#metal)" stroke="#8c8c8c" strokeWidth="1.500" />
    <path d="M80 33Q82 50 61 64 61 75 46 87 47 76 48 71L39 67 37 60Q32 62 24 68 29 53 41 51 54 34 80 33Z" fill="#3a3a3a" />
    <path d="M30 73q-5 3-4 10 9 2 12-5-3 2-6 1-1-2 1-5Z" fill="#3a3a3a" />
    <circle cx="65" cy="48" r="4.500" fill="#d6d6d6" />
  </>
);
const safari = (
  <>
    <circle cx="45" cy="11" r="5" fill="none" stroke="#aaa" strokeWidth="1.800" />
    <circle cx="54" cy="61" r="45.500" fill="url(#rim)" />
    <circle cx="54" cy="60" r="40" fill="#8e8e8e" />
    <circle cx="54" cy="60" r="37" fill="#f4f4f4" />
    <circle cx="54" cy="60" r="33" fill="url(#safG)" />
    <path d="M54 60m-30 5q14-12 30-5t30-9v14q-8 24-30 25-24-2-30-25Z" fill="#1a86cf" opacity=".45" />
    <path d="M52 40l4 13 13-6-7 11 17-2-16 7 6 12-11-7-1 17-5-16-12 6 8-11-20 3 18-8-8-12 12 6Z" fill="#eef6ff" />
    <circle cx="55" cy="60" r="7" fill="#2b8dd4" />
    <path d="M75 38L59 62 51 56Z" fill="#f0512a" />
    <path d="M34 84L51 56l8 6Z" fill="#fff" stroke="#b9c7d4" strokeWidth=".8" />
    <g fill="#fff" fontFamily="Liberation Serif, serif" fontWeight="bold" fontSize="11" textAnchor="middle">
      <text x="50" y="39">N</text>
      <text x="80" y="58">E</text>
      <text x="59" y="89">S</text>
      <text x="29" y="69">W</text>
    </g>
  </>
);
const mail = (
  <>
    <path d="M11 25L83 11l14 78-72 13Z" fill="#f7f7f5" />
    <path d="M11 25L83 11l14 78-72 13Z" fill="none" stroke="#f7f7f5" strokeWidth="6" strokeDasharray="4 2.500" />
    <path d="M18 29l60-12 13 69-60 10Z" fill="url(#skyG)" />
    <path d="M41 27q4 4 6 9 5 8 7 16 3 5 8 6l2 3q6 7 14 10 5 3 6 5l-2 7q-7-2-12-7-6-5-9-11-3 6-9 8l-7-4q4-7 9-11-8-11-11-20-2-6-2-11Z" fill="#4a3a2c" />
    <path d="M45 33q7 9 9 21l-3-1q-5-9-6-20ZM64 66q7 7 16 10-10 0-16-10Z" fill="#b09674" />
    <path d="M43 73q5-8 11-14l4 7q-4 8-9 11Z" fill="#96744a" />
    <circle cx="61" cy="58" r="2.500" fill="#c8a878" />
    <g fill="none" stroke="#53688f" strokeOpacity=".6">
      <circle cx="34" cy="79" r="28" strokeWidth="2" />
      <circle cx="34" cy="79" r="20" />
      <path d="M58 92q12-5 22 0t22-1M56 98q12-5 22 0t24 0M52 103q12-4 22 0t24 2" strokeWidth="1.500" />
    </g>
  </>
);
const contacts = (
  <>
    <path d="M23 106l71-12 4-8-14-70-8 3 10 68-68 12Z" fill="#a87a3c" />
    <path d="M84 17l5 1 2 12-4 1ZM88 35l5 1 2 12-4 1ZM92 52l4 1 3 13-5 1ZM95 68l4 1 2 11-4 1Z" fill="#f4f4f4" />
    <path d="M10 18l70-9 15 78-69 15Z" fill="url(#tanG)" />
    <path d="M10 18l13-2 13 85-13 4Z" fill="#55383a" />
    <path d="M24 103l69-12v3l-68 12Z" fill="#fff" />
    <text x="58" y="65" fontSize="42" textAnchor="middle" fontFamily="Liberation Sans, sans-serif" fill="none" stroke="#fff6df" strokeWidth="1.800" transform="rotate(-7 58 52)">
      @
    </text>
  </>
);
const calendar = (
  <>
    <path d="M14 88l84-17 4 16-84 18Z" fill="#4b4b4b" />
    <path d="M10 30L80 18 84 21 101 80 20 100Z" fill="#5a5a5a" />
    <path d="M12 44l72-12 13 38q-20 14-75 26Z" fill="#fdfdfd" />
    <path d="M20 92q55-11 77-22l1 4Q80 88 22 97Z" fill="#d9d9d9" />
    <path d="M10 29L80 18l6 21-72 12Z" fill="#c2373b" />
    <path d="M48 32l13-2M49 36l13-2M50 40l13-2M67 29l11-2M68 33l11-2M69 37l11-2" stroke="#e07f80" strokeWidth="1.500" strokeDasharray="2 1.500" />
    <g fontFamily="Liberation Sans, sans-serif" fontWeight="bold" textAnchor="middle" transform="rotate(-8 54 60)">
      <text x="30" y="43" fontSize="13" fill="#fff">DEC</text>
      <text x="54" y="82" fontSize="44" fill="#222">20</text>
    </g>
    <path d="M21 15q4-5 5 0l2 17M62 9q4-5 5 0l2 17" fill="none" stroke="#b9b9b9" strokeWidth="3.500" />
  </>
);
const notes = (
  <>
    <path d="M12 22L82 12l15 82-74 13Z" fill="#f3e98a" />
    <path d="M12 19L82 9l2 11-71 11Z" fill="#4a2c26" />
    <path d="M15 42l70-11M17 52l70-11M19 62l70-11M20 72l70-11M22 82l71-11M23 92l71-11" stroke="#c9c06c" strokeWidth="1" />
    <path d="M24 30l9 75" stroke="#e3a25c" strokeWidth="1" />
    <path
      d="M25 41q2-5 3 0t5-3 4-1 6-2 5-2 6-2 6-3M26 49q3-5 4-1t6-3 5-1 7-3 7-2 9-2M27 56q3-5 5-1t7-3 7-2 7-2 8-2 11-3M28 64q3-5 5-1t6-2 7-2 8-2 9-2M31 76q3-5 5-1t6-2 6-2 8-2 8-2 9-2 12-3M32 83q3-5 5-1t6-2 7-2 8-2 8-2 10-2M33 90q3-5 5-1t7-2 7-2 8-3 8-2M34 97q3-5 5-1t6-2 6-1 6-3 8-1"
      fill="none"
      stroke="#4a4630"
      strokeWidth="1.100"
    />
  </>
);
const maps = (
  <>
    <path d="M6 25l79-13 16 79-82 15Z" fill="#fafafa" />
    <path d="M11 29l71-12 15 71-73 13Z" fill="#e4dfd2" />
    <path d="M11 29l46-8 3 10-47 8Z" fill="#6ab344" />
    <path d="M57 21l12-2 3 14-11 2ZM68 35l17-3 4 22-17 3Z" fill="#fff" />
    <path d="M69 19l12-2 2 12-13 2Z" fill="#f2b9c8" />
    <path d="M12 45l54-9 11 52" fill="none" stroke="#2b8fd8" strokeWidth="9" />
    <path d="M12 45l54-9 11 52" fill="none" stroke="#5cc4f7" strokeWidth="5" />
    <path d="M17 68q20-4 32 10t30 18" fill="none" stroke="#f7cf3f" strokeWidth="10" />
    <path d="M25 53q5 2 8-1 5 1 8-1 5 0 10-2 4 7 1 14-4 10-13 10-10-2-13-9-2-6-1-11Z" fill="#3576d8" stroke="#fff" />
    <path d="M25 53q5 2 8-1 5 1 8-1 5 0 10-2l1 6-27 5Z" fill="#d83a3a" />
    <text x="39" y="67" fontSize="12" fontWeight="bold" fill="#fff" textAnchor="middle" fontFamily="Liberation Sans, sans-serif" transform="rotate(-6 39 62)">
      280
    </text>
    <circle cx="82" cy="84" r="22" fill="#ececec" stroke="#b0b0b0" />
    <path d="M79 65l8 17h-9Z" fill="#dd1620" />
    <path d="M78 82h9l-2 18Z" fill="#8b8b8b" />
  </>
);
const messages = (
  <>
    <path d="M53 14c26 0 46 17 46 39S79 92 53 92c-4 0-8 0-12-1-6 6-18 7-30 5 7-3 9-8 10-14C12 76 7 65 7 53 7 31 27 14 53 14Z" fill="url(#bubG)" stroke="#1f55c0" strokeWidth="1.500" />
    <path d="M20 38L56 19M12 58L78 24M14 72L92 34M26 82L94 49" stroke="#fff" strokeOpacity=".1" strokeWidth="7" />
    <path d="M73 52c17 0 30 11 30 25 0 9-5 16-12 20 1 4 4 7 9 8-8 1-15-1-18-5-24 5-39-8-39-23 0-14 13-25 30-25Z" fill="#e9f1fa" stroke="#b5c8dc" />
    <g fill="#7292b4">
      <circle cx="60" cy="77" r="4" />
      <circle cx="73" cy="77" r="4" />
      <circle cx="86" cy="77" r="4" />
    </g>
  </>
);
const facetime = (
  <>
    <path d="M74 53L101 30V87L74 65Z" fill="url(#silver)" stroke="#8c8c8c" />
    <rect x="7.500" y="26" width="65" height="65" rx="9" fill="url(#silver)" stroke="#8f8f8f" />
    <rect x="9" y="28" width="62" height="61" rx="8" fill="#cfcfcf" opacity=".7" />
    <circle cx="39.500" cy="58" r="23.500" fill="#2a2a2a" />
    <circle cx="39.500" cy="58" r="19" fill="#0d1b30" stroke="#555" />
    <circle cx="40" cy="59" r="14.500" fill="#234f8c" />
    <path d="M28 50q4-9 12-8l1 8-8 6ZM42 62l10 1q-1 8-8 10Z" fill="#b9dcf5" opacity=".8" />
    <circle cx="38" cy="58" r="5" fill="#0d2547" />
  </>
);
const itunes = (
  <>
    <circle cx="54.500" cy="57" r="47.500" fill="#e9e9e9" stroke="#9a9a9a" />
    <circle cx="54.500" cy="57" r="43" fill="#123a72" />
    <circle cx="54.500" cy="57" r="41.500" fill="url(#itunesG)" />
    <ellipse cx="54.500" cy="36" rx="32" ry="19" fill="#fff" opacity=".2" />
    <path d="M42 35L74 29V70a8.500 7.500 0 1 1-6-7V42L48 46V76a8.500 7.500 0 1 1-6-7Z" fill="#e6e6ea" stroke="#1d5c9c" />
  </>
);
const terminal = (
  <>
    <rect x="7" y="17" width="95" height="84" rx="2" fill="url(#silver)" stroke="#7d7d7d" />
    <rect x="12" y="22" width="85" height="72" fill="#8f8f8f" />
    <rect x="14" y="24" width="81" height="68" fill="url(#termG)" />
    <path d="M14 72Q40 48 95 42V24H14Z" fill="#fff" opacity=".08" />
    <path d="M20 32l13 6-13 6" fill="none" stroke="#fff" strokeWidth="3.500" />
    <path d="M35 47h13" stroke="#fff" strokeWidth="3" />
  </>
);
const appstore = (
  <>
    <circle cx="54.500" cy="58" r="47.500" fill="#eee" stroke="#9a9a9a" />
    <circle cx="54.500" cy="58" r="43" fill="url(#blueGlow)" />
    <ellipse cx="54.500" cy="37" rx="34" ry="20" fill="#fff" opacity=".22" />
    <path d="M27 54h55v10H27Z" fill="#f1f1f1" stroke="#2456a8" />
    <path d="M49 37q4-2 6 1L36 76l-7 4 1-8Z" fill="#f1f1f1" stroke="#2456a8" />
    <path d="M52 28l4 6 24 40q2 6-3 6-3-1-6-8L52 34Z" fill="#f1f1f1" stroke="#2456a8" />
    <circle cx="87" cy="20.500" r="16" fill="#e01f2a" stroke="#fff" strokeWidth="2.500" />
    <text x="87" y="28" fontSize="21" fill="#fff" textAnchor="middle" fontFamily="Liberation Sans, sans-serif">
      1
    </text>
  </>
);
const phpstorm = (
  <>
    <path d="M4 42H64L84 71 68 100H4Z" fill="url(#phpG)" stroke="#d8dbf5" strokeWidth="1.500" />
    <path d="M75 17h30q-15 14-9 29 16 30-1 54H68q16-22 6-38-14-24 1-45Z" fill="url(#stormG)" stroke="#c96a10" />
    <text x="38" y="86" fontSize="37" fontWeight="bold" fill="#fff" textAnchor="middle" fontFamily="Liberation Sans, sans-serif">
      php
    </text>
  </>
);
const sysprefs = (
  <>
    <rect x="7" y="17" width="95" height="84" rx="3" fill="url(#silver)" stroke="#8a8a8a" />
    <rect x="14" y="24" width="81" height="69" fill="url(#perf)" stroke="#444" />
    <path d="M14 74q16 0 18 19H14ZM95 74q-16 0-18 19h18Z" fill="#d2d2d2" />
    <path d="M14 74q16 0 18 19M95 74q-16 0-18 19" fill="none" stroke="#d2d2d2" strokeWidth="6" strokeDasharray="4 3" />
    <circle cx="54" cy="62" r="32" fill="none" stroke="#ececec" strokeWidth="7" strokeDasharray="5.300 3.080" />
    <circle cx="54" cy="62" r="25" fill="#3a3a3a" stroke="#dedede" strokeWidth="9" />
    <path d="M54 62L37 36M54 62h32M54 62L37 88" stroke="#d6d6d6" strokeWidth="8" />
    <circle cx="54" cy="62" r="14" fill="url(#silver)" />
    <circle cx="54" cy="64" r="4.500" fill="#999" stroke="#444" />
  </>
);
const chrome = (
  <g transform="translate(54.500 58)">
    <circle r="45.500" fill="#fbd533" />
    <path d="M0-20H40.900A45.500 45.500 0 0 0-37.800-25.400L-17.300 10Z" fill="#e23a35" />
    <path d="M-37.800-25.400A45.500 45.500 0 0 0-3.100 45.400L17.300 10-17.300 10Z" fill="#5bb85a" />
    <circle r="20.500" fill="#fff" />
    <circle r="17" fill="#3a86c8" />
    <circle r="45" fill="none" stroke="#000" strokeOpacity=".15" />
  </g>
);
const textedit = (
  <>
    <path d="M3 46l12-5 46 50-21 16-8-2Z" fill="#f0dc5c" />
    <path d="M9 21L75 8l22 78-71 15Z" fill="#fbfbfb" stroke="#cfcfcf" />
    <path
      d="M17 32l12-2M19 40l53-10M20 44l54-10M21 48l54-10M22 52l54-11M23 56l54-11M24 60l54-11M25 64l45-9M26 68l18-4M29 76l11-2M30 80l13-3"
      stroke="#888"
      strokeWidth="1.400"
      strokeDasharray="5 1 3 1.500"
    />
    <path d="M95 36q4-7 7-2l1 4-29 53-10 13 3-16Z" fill="#b9b9b9" stroke="#5d5d5d" />
    <path d="M98 38L70 92" stroke="#f5f5f5" strokeWidth="2" />
    <path d="M81 58q1-8 12-20" fill="none" stroke="#555" strokeWidth="2" />
  </>
);
const mysql = (
  <>
    <rect x="4.500" y="8" width="101" height="101" rx="12" fill="url(#sqlG)" stroke="#3a78ad" />
    <path
      d="M53 36Q48 29 35 27 32 23 25 21 17 20 18 26 19 33 24 36 22 46 32 50 27 64 35 74L39 63 44 73 52 81M45 29Q56 34 60 44 68 56 72 68 80 74 92 79L79 82 95 94"
      fill="none"
      stroke="#eaf4fb"
      strokeWidth="2.800"
      strokeLinejoin="round"
    />
    <path d="M34 34q4 1 2 5" fill="none" stroke="#eaf4fb" strokeWidth="2" />
    <path d="M74 18q0 8 8 10l11 11q4 1 5-3L88 24q1-8-6-10l1 7-5 1Z" fill="#eaf4fb" />
  </>
);
const folder = (
  <>
    <path d="M25 11h4V7h30q12 2 23 28v8H25Z" fill="#ececec" stroke="#bbb" />
    <path d="M60 12q2 16 21 17" fill="#fff" stroke="#aaa" />
    <path d="M54 12v28" stroke="#555" strokeWidth="9" />
    <path d="M54 12v28" stroke="#999" strokeWidth="2" strokeDasharray="2 1" />
    <path d="M16 45V33l3-3h26l3 7h45l3 4v8H16Z" fill="#8ab5d2" />
    <path d="M10 41h89q3 0 2 5l-2 52H10L8 46q-1-5 2-5Z" fill="url(#foldG)" stroke="#cfe4f1" strokeWidth="1" />
    <path d="M10 99h89" stroke="#4e7b99" strokeWidth="2" />
  </>
);
const trash = (
  <>
    <path d="M17 30L26 98Q54 112 82 98L91 30Z" fill="url(#mesh)" />
    <path d="M17 30L26 98q8 6 16 7L34 36ZM91 30L82 98q-6 5-12 6l6-68Z" fill="#000" opacity=".3" />
    <path d="M24 86Q54 100 84 86L82 99Q54 114 26 99Z" fill="url(#canG)" />
    <ellipse cx="54" cy="25" rx="37" ry="13" fill="#3d4548" />
    <ellipse cx="54" cy="25" rx="37" ry="13" fill="url(#mesh)" opacity=".3" />
    <ellipse cx="54" cy="25" rx="37" ry="13" fill="none" stroke="url(#canG)" strokeWidth="5" />
  </>
);

type DockApp = { name: string; art: React.ReactNode; glow: string; running?: boolean };

const APPS: DockApp[] = [
  { name: 'Finder', art: finder, glow: '#9fc0f5', running: true },
  { name: 'Launchpad', art: launchpad, glow: '#ffffff' },
  { name: 'Safari', art: safari, glow: '#8fe9ee' },
  { name: 'Mail', art: mail, glow: '#a9cdf5' },
  { name: 'Contacts', art: contacts, glow: '#f5dda8' },
  { name: 'Calendar', art: calendar, glow: '#ffffff' },
  { name: 'Notes', art: notes, glow: '#f3f0b0', running: true },
  { name: 'Maps', art: maps, glow: '#f5f2c8' },
  { name: 'Messages', art: messages, glow: '#a5e4f2' },
  { name: 'FaceTime', art: facetime, glow: '#ffffff' },
  { name: 'iTunes', art: itunes, glow: '#7cc3f0', running: true },
  { name: 'Terminal', art: terminal, glow: '#8c9095', running: true },
  { name: 'App Store', art: appstore, glow: '#8ce6f2' },
  { name: 'PhpStorm', art: phpstorm, glow: '#c3c6f2', running: true },
  { name: 'System Preferences', art: sysprefs, glow: '#b5b9be' },
  { name: 'Google Chrome', art: chrome, glow: '#dfe9a0', running: true },
  { name: 'TextEdit', art: textedit, glow: '#f5f0c0', running: true },
  { name: 'MySQL Workbench', art: mysql, glow: '#a8c4dc', running: true },
];

const PLACES: DockApp[] = [
  { name: 'Documents', art: folder, glow: '#b5d8ea' },
  { name: 'Trash', art: trash, glow: '#ffffff' },
];

function DockItem({ app }: { app: DockApp }) {
  return (
    <button aria-label={app.name} className="flex w-[108px] flex-col items-center">
      <svg viewBox="0 0 108 128" className="h-32 w-[108px]">
        <ellipse cx="54" cy="120" rx="40" ry="7" fill={app.glow} opacity=".7" filter="url(#soft)" />
        <ellipse cx="54" cy="103" rx="40" ry="3" fill="#4a5058" opacity=".35" filter="url(#soft)" />
        {app.art}
      </svg>
      {app.running && <span className="h-1.5 w-6 rounded-xs bg-white shadow-[0_0_8px_4px_#8cc8f0]" />}
    </button>
  );
}

function Dock() {
  return (
    <footer className="relative flex h-[146px] shrink-0 items-start justify-center overflow-hidden bg-[#0c2f55] pt-2.5 pl-2.5">
      <DockDefs />
      <svg viewBox="0 0 2560 146" preserveAspectRatio="none" className="absolute inset-0 h-full w-full" aria-hidden="true">
        <defs>
          <linearGradient id="night" x1="0" y1="0" x2="0" y2="1">
            <stop offset="0" stopColor="#000" />
            <stop offset=".1" stopColor="#000306" stopOpacity=".95" />
            <stop offset=".35" stopColor="#04101f" stopOpacity=".4" />
            <stop offset="1" stopColor="#04101f" stopOpacity="0" />
          </linearGradient>
          <linearGradient id="shelf" x1="0" y1="0" x2="0" y2="1">
            <stop offset="0" stopColor="#969ca5" />
            <stop offset=".5" stopColor="#c3c8cf" />
            <stop offset="1" stopColor="#eef1f5" />
          </linearGradient>
          <filter id="sea" x="0" y="0" width="100%" height="100%">
            <feTurbulence type="fractalNoise" baseFrequency=".006 .05" numOctaves="4" seed="7" />
            <feColorMatrix values="0 0 0 0 .2  0 0 0 0 .42  0 0 0 0 .66  1.800 0 0 0 -.6" />
          </filter>
        </defs>
        <rect width="2560" height="146" filter="url(#sea)" opacity=".6" />
        <rect width="2560" height="146" fill="url(#night)" />
        <path d="M190 62H2382Q2391 62 2396 70L2430 130Q2433 138 2424 138H138Q128 138 131 130L172 70Q177 62 190 62Z" fill="url(#shelf)" />
        <path d="M130 136V141Q131 146 138 146H2424Q2431 146 2431 141V136Z" fill="#a2a6ab" />
        <path d="M132 138H2429" stroke="#fff" strokeWidth="2" />
      </svg>
      <div className="relative flex">
        {APPS.map((a) => (
          <DockItem key={a.name} app={a} />
        ))}
        <svg viewBox="0 0 54 128" className="h-32 w-[54px]" aria-hidden="true">
          <path d="M14 60l21 59" stroke="#a3a8ae" strokeWidth="3" />
          <path d="M16 60l21 59" stroke="#f0f2f5" />
        </svg>
        {PLACES.map((a) => (
          <DockItem key={a.name} app={a} />
        ))}
      </div>
    </footer>
  );
}

export default function App() {
  return (
    <div className="flex h-screen flex-col overflow-hidden bg-[#3f6f5c] font-['Liberation_Sans',Arial,sans-serif]">
      <MenuBar />
      <TabStrip />
      <Toolbar />
      <FlowHeader />
      <section className="flex min-h-0 flex-1 flex-col border-l-2 border-[#999]">
        <div className="h-[114px] shrink-0 border-b-2 border-[#bdbdbd] bg-[#f9f9f9]" />
        <Conversation />
        <Composer />
      </section>
      <Dock />
    </div>
  );
}
